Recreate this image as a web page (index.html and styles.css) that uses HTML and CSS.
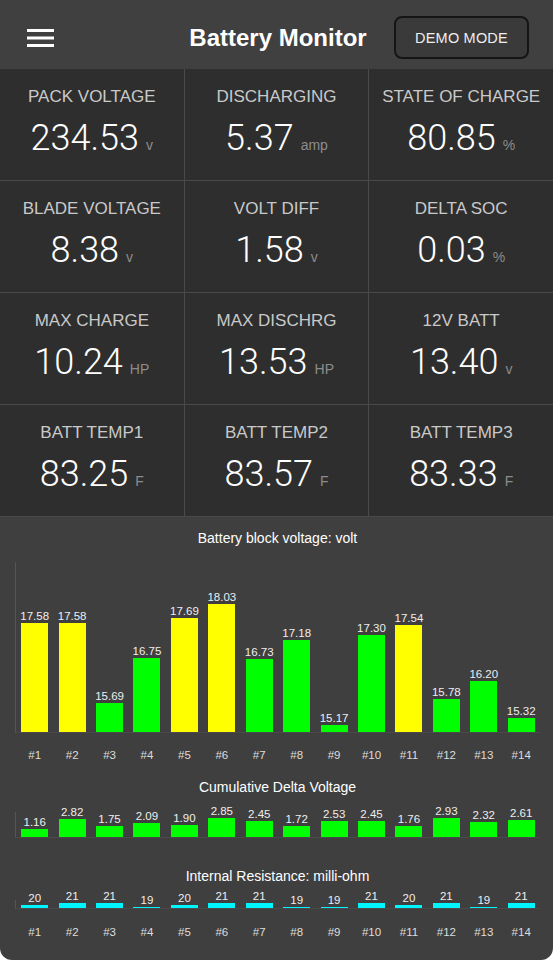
FILE: index.html
```html
<!DOCTYPE html>
<html lang="en">
<head>
    <meta charset="UTF-8">
    <meta name="viewport" content="width=device-width, initial-scale=1.0">
    <title>Battery Monitor</title>
    <link rel="stylesheet" href="styles.css">
</head>
<body>
    <div class="app">
        <header class="topbar">
            <button class="menu" aria-label="Menu">
                <svg width="27" height="18" viewBox="0 0 27 18">
                    <rect x="0" y="0" width="27" height="3" fill="#fff"/>
                    <rect x="0" y="7.5" width="27" height="3" fill="#fff"/>
                    <rect x="0" y="15" width="27" height="3" fill="#fff"/>
                </svg>
            </button>
            <h1>Battery Monitor</h1>
            <button class="demo">DEMO MODE</button>
        </header>

        <div class="stats">
            <div class="stat"><div class="stat-label">PACK VOLTAGE</div><div class="stat-value"><span class="num">234.53</span><span class="unit">v</span></div></div>
            <div class="stat"><div class="stat-label">DISCHARGING</div><div class="stat-value"><span class="num">5.37</span><span class="unit">amp</span></div></div>
            <div class="stat"><div class="stat-label">STATE OF CHARGE</div><div class="stat-value"><span class="num">80.85</span><span class="unit">%</span></div></div>
            <div class="stat"><div class="stat-label">BLADE VOLTAGE</div><div class="stat-value"><span class="num">8.38</span><span class="unit">v</span></div></div>
            <div class="stat"><div class="stat-label">VOLT DIFF</div><div class="stat-value"><span class="num">1.58</span><span class="unit">v</span></div></div>
            <div class="stat"><div class="stat-label">DELTA SOC</div><div class="stat-value"><span class="num">0.03</span><span class="unit">%</span></div></div>
            <div class="stat"><div class="stat-label">MAX CHARGE</div><div class="stat-value"><span class="num">10.24</span><span class="unit">HP</span></div></div>
            <div class="stat"><div class="stat-label">MAX DISCHRG</div><div class="stat-value"><span class="num">13.53</span><span class="unit">HP</span></div></div>
            <div class="stat"><div class="stat-label">12V BATT</div><div class="stat-value"><span class="num">13.40</span><span class="unit">v</span></div></div>
            <div class="stat"><div class="stat-label">BATT TEMP1</div><div class="stat-value"><span class="num">83.25</span><span class="unit">F</span></div></div>
            <div class="stat"><div class="stat-label">BATT TEMP2</div><div class="stat-value"><span class="num">83.57</span><span class="unit">F</span></div></div>
            <div class="stat"><div class="stat-label">BATT TEMP3</div><div class="stat-value"><span class="num">83.33</span><span class="unit">F</span></div></div>
        </div>

        <section class="charts">
            <h2 class="chart-title">Battery block voltage: volt</h2>
            <div class="plot plot-main" id="voltChart"></div>
            <div class="xlabels xlabels-top" id="labelsTop"></div>

            <h2 class="chart-title title-delta">Cumulative Delta Voltage</h2>
            <div class="plot plot-delta" id="deltaChart"></div>

            <h2 class="chart-title title-ir">Internal Resistance: milli-ohm</h2>
            <div class="plot plot-ir" id="irChart"></div>
            <div class="xlabels xlabels-bottom" id="labelsBottom"></div>
        </section>
    </div>

    <script>
        const volts = [17.58, 17.58, 15.69, 16.75, 17.69, 18.03, 16.73, 17.18, 15.17, 17.30, 17.54, 15.78, 16.20, 15.32];
        const delta = [1.16, 2.82, 1.75, 2.09, 1.90, 2.85, 2.45, 1.72, 2.53, 2.45, 1.76, 2.93, 2.32, 2.61];
        const resist = [20, 21, 21, 19, 20, 21, 21, 19, 19, 21, 20, 21, 19, 21];

        function drawBars(id, values, height, color, digits) {
            const chart = document.getElementById(id);
            values.forEach(v => {
                const slot = document.createElement('div');
                slot.className = 'slot';
                const label = document.createElement('span');
                label.className = 'val';
                label.textContent = v.toFixed(digits);
                const bar = document.createElement('div');
                bar.className = 'bar ' + color(v);
                bar.style.height = height(v) + 'px';
                slot.appendChild(label);
                slot.appendChild(bar);
                chart.appendChild(slot);
            });
        }

        function drawLabels(id) {
            const row = document.getElementById(id);
            for (let i = 1; i <= 14; i++) {
                const span = document.createElement('span');
                span.textContent = '#' + i;
                row.appendChild(span);
            }
        }

        // volt: scale 15..19 over 170px, yellow from 17.5 up
        drawBars('voltChart', volts, v => (v - 15) * 42.3, v => v >= 17.5 ? 'yellow' : 'green', 2);
        drawBars('deltaChart', delta, v => v * 6.5, () => 'green', 2);
        drawBars('irChart', resist, v => 1 + (v - 19) * 2, () => 'cyan', 0);
        drawLabels('labelsTop');
        drawLabels('labelsBottom');
    </script>
</body>
</html>
```

FILE: styles.css
```css
body {
    margin: 0;
    background-color: #fff;
    font-family: "Liberation Sans", Arial, sans-serif;
    color: #fff;
}
.app {
    background-color: #3f3f3f;
    min-height: 100vh;
    border-radius: 0 0 12px 12px;
    overflow: hidden;
}

/* header */
.topbar {
    height: 63px;
    padding: 6px 24px 0 27px;
    display: grid;
    grid-template-columns: 1fr auto 1fr;
    align-items: center;
    background-color: #404040;
}
.menu {
    justify-self: start;
    padding: 0;
    border: none;
    background: none;
    display: flex;
}
h1 {
    margin: 0;
    font-size: 24px;
    font-weight: bold;
    color: #fff;
}
.demo {
    justify-self: end;
    width: 135px;
    height: 43px;
    border: 2px solid #151515;
    border-radius: 8px;
    background-color: #3a3a3a;
    color: #eee;
    font-family: "Liberation Sans", Arial, sans-serif;
    font-size: 14.5px;
    letter-spacing: 0.2px;
}

/* stat grid */
.stats {
    display: grid;
    grid-template-columns: repeat(3, 1fr);
    grid-auto-rows: 111px;
    gap: 1px;
    background-color: #4a4a4a;
    border-bottom: 1px solid #4a4a4a;
}
.stat {
    background-color: #2e2e2e;
    text-align: center;
    padding-top: 18px;
}
.stat-label {
    font-size: 17px;
    line-height: 20px;
    color: #c9c9c9;
}
.stat-value {
    margin-top: 11px;
    display: flex;
    justify-content: center;
    align-items: baseline;
    gap: 7px;
}
.num {
    font-family: Roboto, "Liberation Sans", sans-serif;
    font-weight: 300;
    font-size: 36px;
    line-height: 40px;
    color: #fff;
}
.unit {
    font-size: 14px;
    color: #8c8c8c;
}

/* charts */
.charts {
    padding: 13px 13px 20px 15px;
}
.chart-title {
    margin: 0;
    text-align: center;
    font-size: 14px;
    font-weight: normal;
    line-height: 16px;
    color: #fff;
}
.plot {
    display: flex;
    border-left: 1px solid #555;
    border-bottom: 1px solid #4a4a4a;
}
.plot-main {
    height: 170px;
    margin-top: 16px;
}
.plot-delta {
    height: 25px;
    margin-top: 17px;
}
.plot-ir {
    height: 8px;
    margin-top: 16px;
}
.title-delta {
    margin-top: 17px;
}
.title-ir {
    margin-top: 30px;
}
.slot {
    flex: 1;
    display: flex;
    flex-direction: column;
    justify-content: flex-end;
    align-items: center;
}
.val {
    flex-shrink: 0;
    font-size: 11.5px;
    line-height: 13px;
    color: #eee;
    white-space: nowrap;
}
.bar {
    flex-shrink: 0;
    width: 27px;
}
.yellow {
    background-color: #ffff00;
}
.green {
    background-color: #00ff00;
}
.cyan {
    background-color: #00f6ff;
}
.xlabels {
    display: flex;
    margin-left: 1px;
}
.xlabels span {
    flex: 1;
    text-align: center;
    font-size: 11.5px;
    line-height: 14px;
    color: #ddd;
}
.xlabels-top {
    margin-top: 15px;
}
.xlabels-bottom {
    margin-top: 16px;
}
```
